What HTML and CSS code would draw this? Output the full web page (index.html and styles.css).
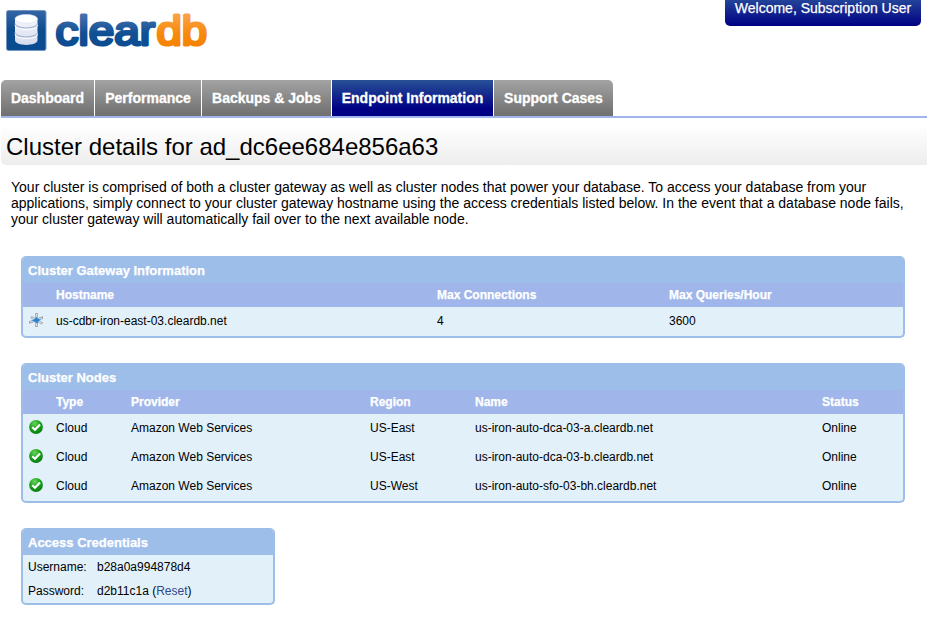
FILE: index.html
```html
<!DOCTYPE html>
<html lang="en">
<head>
<meta charset="utf-8">
<title>ClearDB - Endpoint Information</title>
<link rel="stylesheet" href="styles.css">
</head>
<body>
<svg class="defs" width="0" height="0" aria-hidden="true">
  <defs>
    <radialGradient id="green" cx=".4" cy=".25" r=".8"><stop offset="0" stop-color="#6bd55d"/><stop offset=".45" stop-color="#20a522"/><stop offset="1" stop-color="#057812"/></radialGradient>
    <symbol id="ok" viewBox="0 0 14 14">
      <circle cx="7" cy="7" r="6.9" fill="url(#green)"/>
      <path d="M3.2 7.2 6 9.8 11 4.5" fill="none" stroke="#fff" stroke-width="2.2"/>
    </symbol>
  </defs>
</svg>
<header class="top">
  <svg class="logo" width="216" height="64" viewBox="0 0 216 64" role="img" aria-label="cleardb">
    <defs>
      <linearGradient id="box" x2="0" y2="1"><stop offset="0" stop-color="#3566a5"/><stop offset=".5" stop-color="#0c4c8f"/><stop offset="1" stop-color="#0b4c91"/></linearGradient>
      <linearGradient id="blue" gradientUnits="userSpaceOnUse" x1="0" y1="14" x2="0" y2="47"><stop offset="0" stop-color="#4672b0"/><stop offset=".6" stop-color="#0f4f94"/><stop offset="1" stop-color="#0d4c90"/></linearGradient>
      <linearGradient id="orange" gradientUnits="userSpaceOnUse" x1="0" y1="14" x2="0" y2="47"><stop offset="0" stop-color="#fba345"/><stop offset=".6" stop-color="#f68a0d"/><stop offset="1" stop-color="#f58200"/></linearGradient>
      <linearGradient id="disk" x2="0" y2="1"><stop offset="0" stop-color="#f4f6fb"/><stop offset="1" stop-color="#d5dcec"/></linearGradient>
    </defs>
    <rect x="6.500" y="10.500" width="39.500" height="40" rx="2" fill="url(#box)" stroke="#7497c2"/>
    <path d="M15 18.500V40c0 6.500 22.500 6.500 22.500 0V18.500z" fill="url(#disk)"/>
    <path d="M15 23.500c0 6 22.500 6 22.500 0M15 32.500c0 6 22.500 6 22.500 0" fill="none" stroke="#a6b6d4" stroke-width="1.100"/>
    <path d="M15 25c0 6 22.500 6 22.500 0M15 34c0 6 22.500 6 22.500 0" fill="none" stroke="#fff"/>
    <ellipse cx="26.250" cy="18.800" rx="11.250" ry="4.300" fill="#fff" stroke="#dce3ef" stroke-width=".6"/>
    <g class="wordmark">
      <text x="55.500" y="45.300" textLength="99.500" lengthAdjust="spacingAndGlyphs" fill="url(#blue)" stroke="url(#blue)">clear</text>
      <text x="156.500" y="45.300" textLength="50.500" lengthAdjust="spacingAndGlyphs" fill="url(#orange)" stroke="url(#orange)">db</text>
    </g>
  </svg>
  <div class="welcome">Welcome, Subscription User</div>
</header>
<nav class="tabs">
  <a class="tab t1">Dashboard</a><a class="tab t2">Performance</a><a class="tab t3">Backups &amp; Jobs</a><a class="tab t4 active">Endpoint Information</a><a class="tab t5">Support Cases</a>
</nav>
<h1>Cluster details for ad_dc6ee684e856a63</h1>
<p class="intro">Your cluster is comprised of both a cluster gateway as well as cluster nodes that power your database. To access your database from your<br>applications, simply connect to your cluster gateway hostname using the access credentials listed below. In the event that a database node fails,<br>your cluster gateway will automatically fail over to the next available node.</p>
<main>
  <section class="panel gateway">
    <h2>Cluster Gateway Information</h2>
    <div class="row head"><span></span><span>Hostname</span><span>Max Connections</span><span>Max Queries/Hour</span></div>
    <div class="row"><span><svg class="icon" width="14" height="14" viewBox="0 0 14 14"><g fill="none" stroke="#8d989f" stroke-width="2.400"><path d="M7.500 0v14M0 9.500 14 4.500M2 4 13.500 10.500"/></g><g fill="none" stroke="#dce2e5" stroke-width="1.100"><path d="M7.500 .7v12.600M.7 9.200 13.300 4.800M2.500 4.300l10.500 5.900"/></g><path d="m7.500 3.700 1.200 2 3 1-2.200 1.500-1.500 2.600-1.800-2.100L3 7.700l3-2z" fill="#2386dc"/></svg></span><span>us-cdbr-iron-east-03.cleardb.net</span><span>4</span><span>3600</span></div>
  </section>
  <section class="panel nodes">
    <h2>Cluster Nodes</h2>
    <div class="row head"><span></span><span>Type</span><span>Provider</span><span>Region</span><span>Name</span><span>Status</span></div>
    <div class="row"><span><svg class="icon" width="14" height="14"><use href="#ok"/></svg></span><span>Cloud</span><span>Amazon Web Services</span><span>US-East</span><span>us-iron-auto-dca-03-a.cleardb.net</span><span>Online</span></div>
    <div class="row"><span><svg class="icon" width="14" height="14"><use href="#ok"/></svg></span><span>Cloud</span><span>Amazon Web Services</span><span>US-East</span><span>us-iron-auto-dca-03-b.cleardb.net</span><span>Online</span></div>
    <div class="row"><span><svg class="icon" width="14" height="14"><use href="#ok"/></svg></span><span>Cloud</span><span>Amazon Web Services</span><span>US-West</span><span>us-iron-auto-sfo-03-bh.cleardb.net</span><span>Online</span></div>
  </section>
  <section class="panel credentials">
    <h2>Access Credentials</h2>
    <div class="row"><span>Username:</span><span>b28a0a994878d4</span></div>
    <div class="row"><span>Password:</span><span>d2b11c1a (<a>Reset</a>)</span></div>
  </section>
</main>
</body>
</html>
```
FILE: styles.css
```css
* { box-sizing: border-box; }
body { margin: 0; background: #fff; color: #000; font-family: "Liberation Sans", Arial, sans-serif; font-size: 12px; overflow: hidden; }
.defs { display: block; width: 0; height: 0; }
.top { display: flex; justify-content: space-between; align-items: flex-start; height: 80px; padding-right: 6px; }
.logo { display: block; }
.wordmark { font-size: 41px; stroke-width: 3px; stroke-linejoin: round; }
.welcome { width: 196px; height: 26px; line-height: 17px; text-align: center; font-size: 14px; color: #fff; background: linear-gradient(#234399, #000084); border-radius: 0 0 5px 5px; -webkit-text-stroke: .25px #fff; white-space: nowrap; }
.tabs { display: flex; gap: 1px; height: 38px; margin-left: 1px; border-bottom: 2px solid #a0b6ea; }
.tab { height: 36px; line-height: 36px; text-align: center; font-size: 14px; font-weight: bold; color: #fff; background: linear-gradient(#a3a3a3, #6f6f6f); -webkit-text-stroke: .3px #fff; white-space: nowrap; }
.t1 { width: 93px; border-top-left-radius: 5px; }
.t2 { width: 106px; }
.t3 { width: 129px; }
.t4 { width: 161px; }
.t5 { width: 119px; border-top-right-radius: 5px; }
.active { background: linear-gradient(#285197, #000084 80%); }
h1 { margin: 7px 0 0 1px; padding-left: 5px; height: 40px; line-height: 43px; font-size: 24px; font-weight: normal; background: linear-gradient(#fff, #ededed); border-radius: 5px 0 0 5px; white-space: nowrap; }
.intro { margin: 14px 0 0 11px; font-size: 14px; line-height: 16px; white-space: nowrap; }
main { padding: 29px 22px 0 21px; }
.panel { border: 2px solid #9ebeea; border-top: 0; border-radius: 5px; background: #e2f0fa; overflow: hidden; }
h2 { margin: 0; height: 27px; line-height: 29px; padding-left: 5px; font-size: 13px; color: #fff; background: #9ebeea; -webkit-text-stroke: .25px #fff; }
.row { display: grid; height: 29px; line-height: 28px; white-space: nowrap; }
.head { height: 24px; line-height: 24px; font-weight: bold; color: #fff; background: #a0b6ea; -webkit-text-stroke: .25px #fff; }
.gateway { height: 82px; }
.gateway .row { grid-template-columns: 33px 381px 232px 1fr; }
.nodes { margin-top: 25px; height: 140px; }
.nodes .row { grid-template-columns: 33px 75px 239px 105px 347px 1fr; }
.icon { display: block; margin: 6px 0 0 6px; }
.credentials { width: 254px; height: 77px; margin-top: 25px; }
.credentials .row { height: 24px; line-height: 24px; padding-left: 5px; grid-template-columns: 69px 1fr; }
.credentials a { color: #2e4a8b; }
```
